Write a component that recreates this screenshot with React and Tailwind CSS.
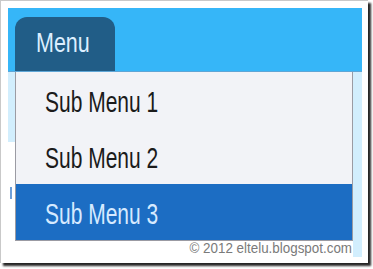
export default function App() {
  const font = { fontFamily: '"Liberation Sans", Arial, sans-serif' };
  return (
    <div className="w-[373px] h-[269px] bg-white" style={font}>
      <div className="w-[368px] h-[263px] bg-white border-l border-t border-[#c9c9c9] pl-[7px] pt-[7px] shadow-[3px_3px_2px_rgba(0,0,0,0.85)]">
        <div className="w-[354px] h-[249px] flex flex-col bg-white">
          <div className="h-[64px] bg-[#36b6f8] border-b border-[#5fa6d6] pl-[7px] pt-[9px] flex items-end">
            <div className="w-[100px] h-[54px] bg-[#215d87] rounded-t-[12px] flex items-center pl-[21px]">
              <span className="inline-block text-[21.5px] leading-none text-[#dcefff] scale-y-[1.3]">Menu</span>
            </div>
          </div>
          <div className="flex flex-1">
            <div className="w-[7px] flex flex-col">
              <div className="h-[70px] bg-[#d2eefd]"></div>
              <div className="ml-[2px] mt-[45px] w-[2px] h-[12px] bg-[#6f9fd8]"></div>
            </div>
            <div className="w-[338px] flex flex-col">
              <div className="border-x border-b border-[#9b9ba3] bg-[#f2f3f7]">
                <div className="h-[56px] flex items-center pl-[29px] pt-[2px]">
                  <span className="inline-block text-[21px] leading-none text-[#1b1b1b] scale-y-[1.37]">Sub Menu 1</span>
                </div>
                <div className="h-[56px] flex items-center pl-[29px] pt-[2px]">
                  <span className="inline-block text-[21px] leading-none text-[#1b1b1b] scale-y-[1.37]">Sub Menu 2</span>
                </div>
                <div className="h-[56px] flex items-center pl-[29px] pt-[2px] bg-[#1c6dc3]">
                  <span className="inline-block text-[21px] leading-none text-[#d6eaff] scale-y-[1.37]">Sub Menu 3</span>
                </div>
              </div>
              <div className="flex-1 flex justify-end items-center pr-[1px]">
                <span className="inline-block text-[13.4px] leading-none text-[#7a7a7a] scale-y-110">© 2012 eltelu.blogspot.com</span>
              </div>
            </div>
            <div className="w-[9px] bg-[#d2eefd]"></div>
          </div>
        </div>
      </div>
    </div>
  );
}
